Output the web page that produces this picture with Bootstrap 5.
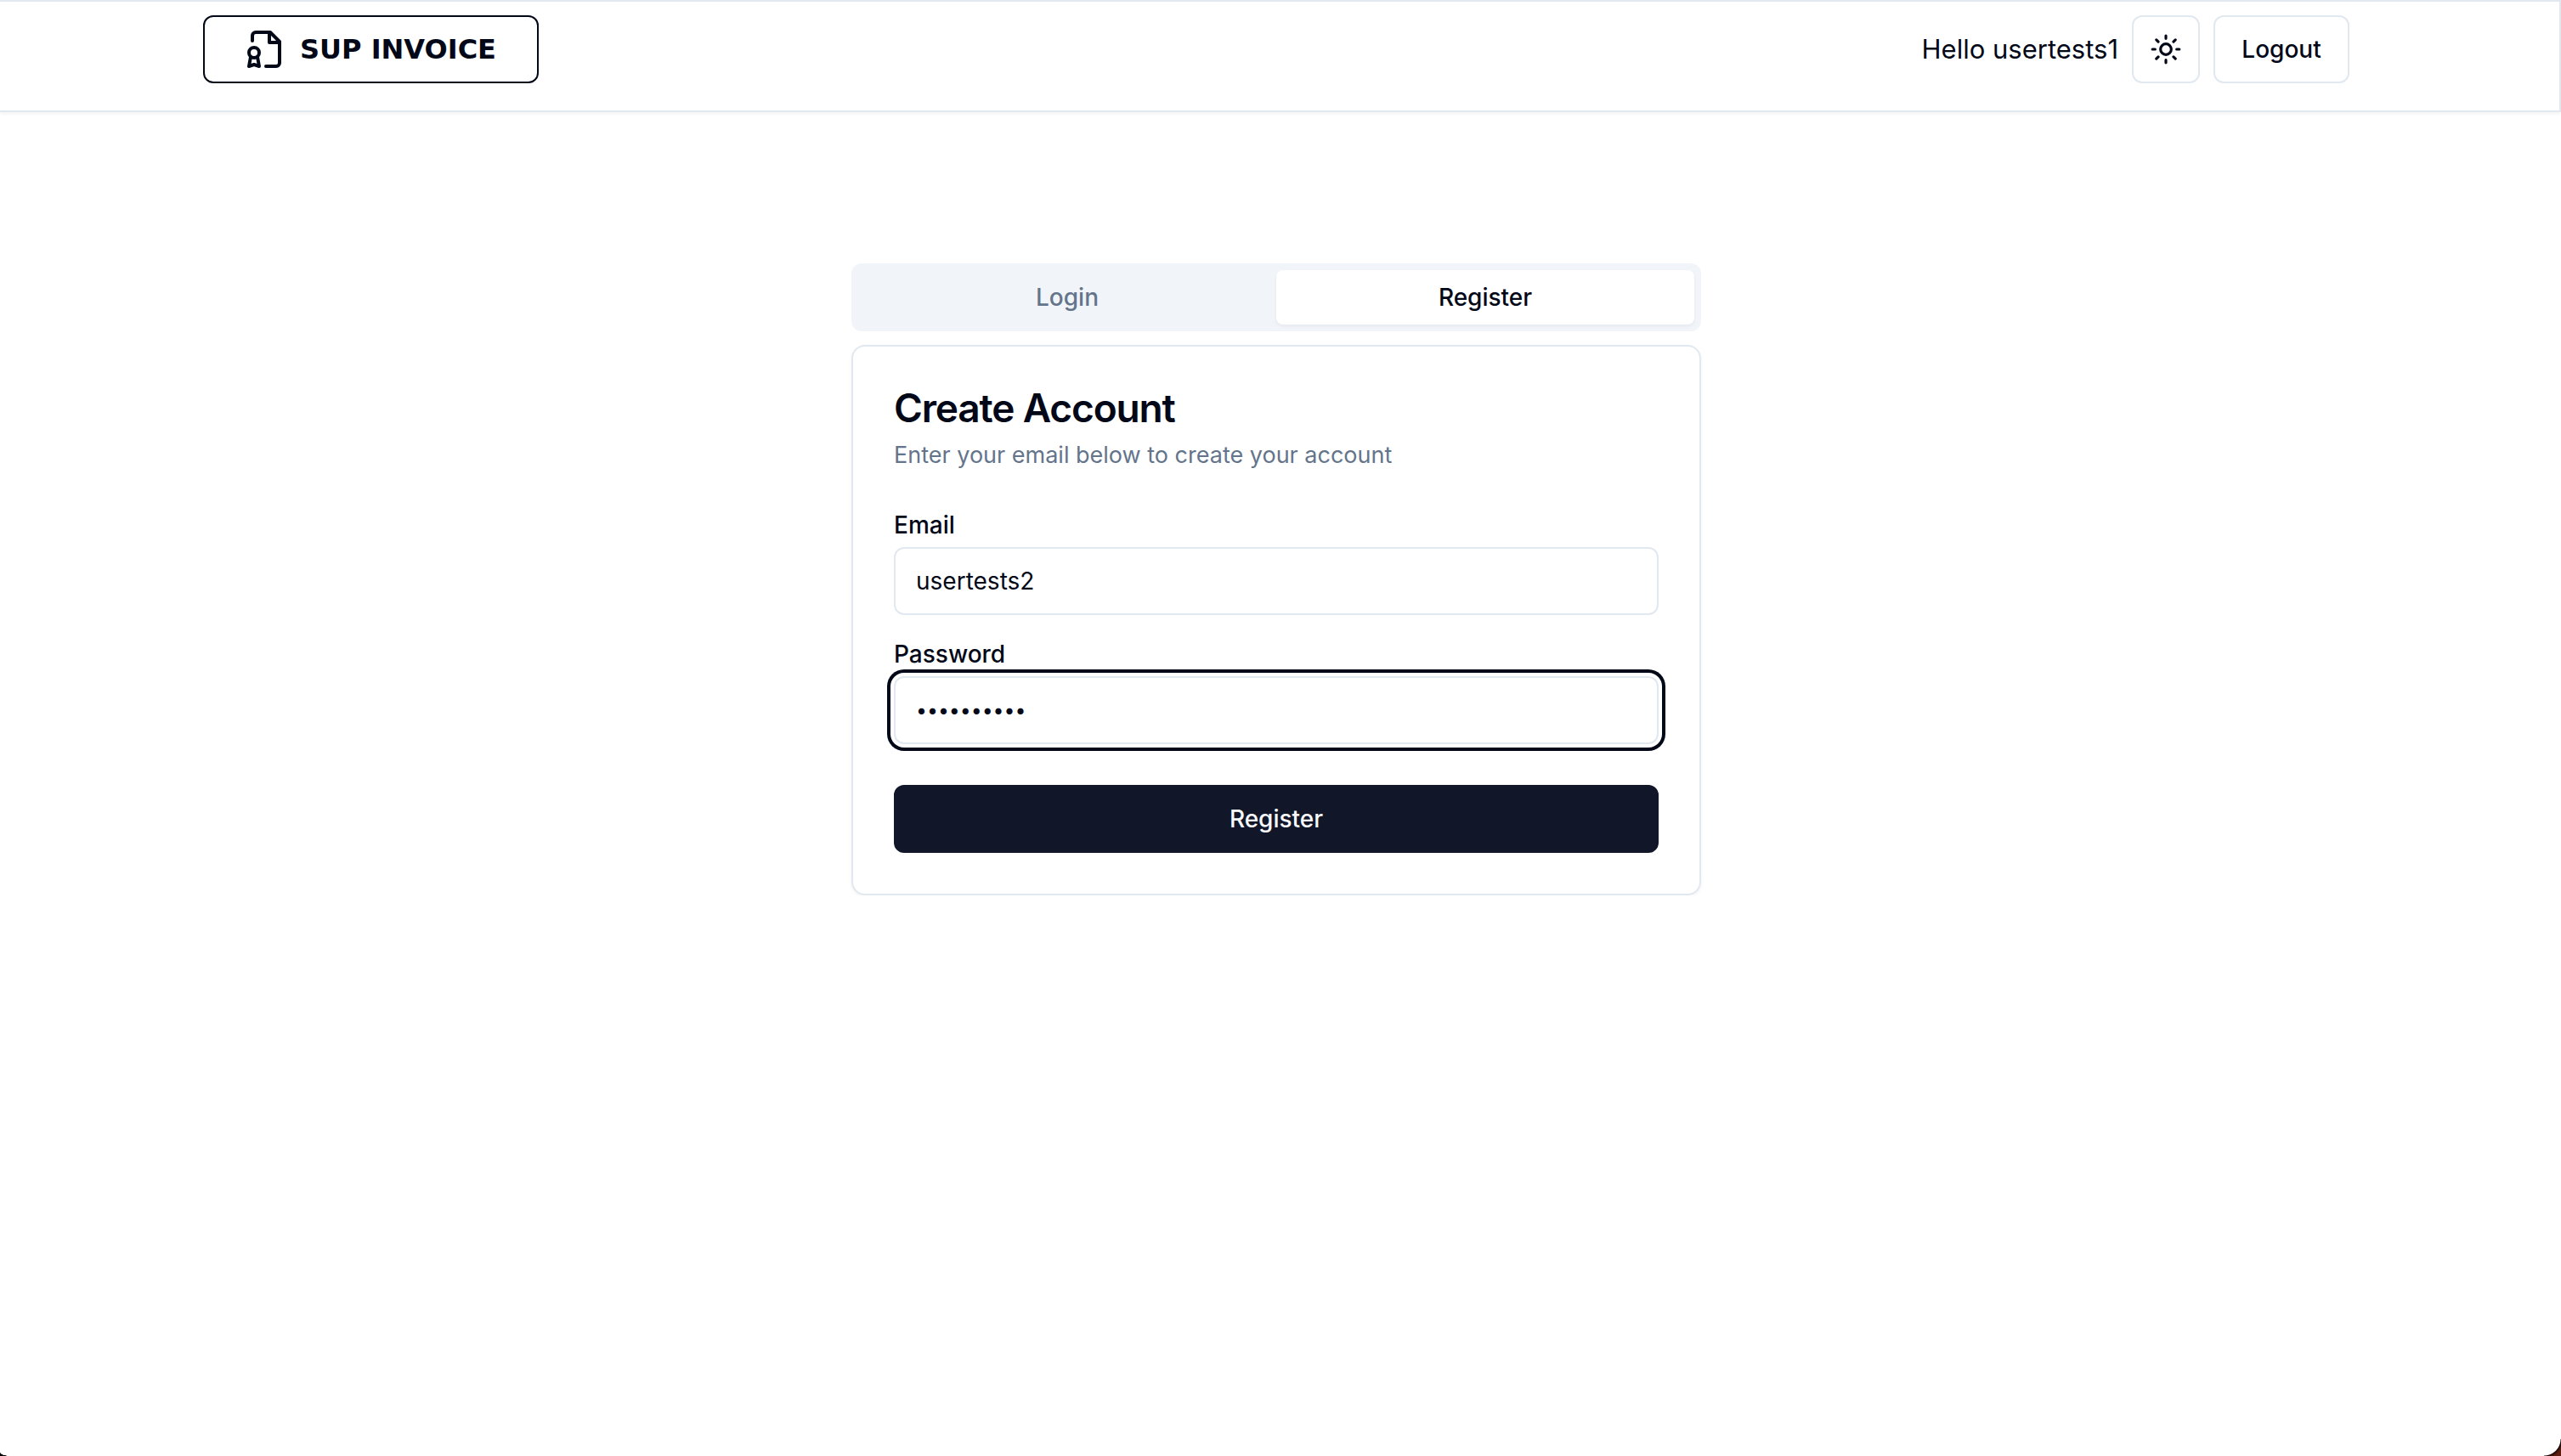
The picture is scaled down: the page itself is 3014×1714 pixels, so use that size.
<!DOCTYPE html>
<html lang="en">
<head>
<meta charset="utf-8">
<meta name="viewport" content="width=device-width, initial-scale=1">
<title>Sup Invoice</title>
<link href="https://cdn.jsdelivr.net/npm/bootstrap@5.3.0/dist/css/bootstrap.min.css" rel="stylesheet">
<style>
  :root { --ink: #020817; --muted: #64748b; --line: #e2e8f0; --soft: #f1f5f9; --primary: #111628; }
  body { font-family: Inter, "Liberation Sans", sans-serif; font-size: 28px; line-height: 40px; color: var(--ink); background: #fff; }
  .site-header { border: 2px solid var(--line); border-left: 0; padding: 16px 8px 32px 0; box-shadow: 0 2px 4px rgba(0, 0, 0, .05); }
  .site-inner { width: 90%; max-width: 2526px; }
  .btn { --bs-btn-font-size: 28px; --bs-btn-line-height: 40px; --bs-btn-font-weight: 500; --bs-btn-color: var(--ink); --bs-btn-border-width: 2px; --bs-btn-border-color: var(--line); --bs-btn-border-radius: 12px; --bs-btn-padding-y: 18px; --bs-btn-padding-x: 32px; min-height: 80px; }
  .btn-brand { --bs-btn-border-color: var(--ink); --bs-btn-padding-x: 48px; --bs-btn-padding-y: 0; gap: 16px; font-family: "DejaVu Sans", sans-serif; font-size: 32px; font-weight: 700; }
  .btn-square { --bs-btn-padding-x: 0; --bs-btn-padding-y: 0; width: 80px; }
  .btn-logout { --bs-btn-padding-x: 0; width: 160px; }
  .btn-submit { --bs-btn-color: #f8fafc; --bs-btn-bg: var(--primary); --bs-btn-border-color: var(--primary); }
  .greeting { font-size: 31px; }
  .icon-line { fill: none; stroke: currentColor; stroke-width: 2; stroke-linecap: round; stroke-linejoin: round; }
  .page-main { padding: 178px 10px 0 0; }
  .auth-panel { max-width: 1000px; }
  .auth-tabs { background: var(--soft); border-radius: 12px; padding: 8px; margin-bottom: 16px; }
  .auth-tabs .nav-link { padding: 12px 24px; line-height: 40px; font-weight: 500; color: var(--muted); background: transparent; border: 0; border-radius: 8px; }
  .auth-tabs .nav-link.active { color: var(--ink); background: #fff; box-shadow: 0 2px 4px rgba(0, 0, 0, .05); }
  .auth-card { --bs-card-border-width: 2px; --bs-card-border-color: var(--line); --bs-card-border-radius: 16px; --bs-card-spacer-x: 48px; --bs-card-spacer-y: 48px; box-shadow: 0 2px 4px rgba(0, 0, 0, .05); color: var(--ink); }
  .auth-title { font-size: 46px; line-height: 48px; font-weight: 600; letter-spacing: -0.025em; margin-bottom: 12px; }
  .auth-note { font-size: 27px; color: var(--muted); margin-bottom: 48px; }
  .form-label { display: block; line-height: 28px; font-weight: 500; margin-bottom: 12px; }
  .form-control { height: 80px; padding: 16px 24px; border: 2px solid var(--line); border-radius: 12px; font-size: 28px; line-height: 40px; color: var(--ink); }
  .form-control[type="password"] { font-size: 23px; }
  .field-row { margin-bottom: 32px; }
  .field-row:last-of-type { margin-bottom: 48px; }
  .form-control.is-current { box-shadow: 0 0 0 4px #fff, 0 0 0 8px var(--ink); }
  .window-corner { position: fixed; bottom: 0; width: 20px; height: 20px; pointer-events: none; }
  .corner-start { left: 0; width: 12px; height: 4px; background: radial-gradient(ellipse 12px 4px at 100% 0, transparent 92%, #000 100%); }
  .corner-end { right: 0; background: radial-gradient(circle at 0 0, transparent 19px, #1a0806 20px, #5c1c10 23px); }
</style>
<script src="https://cdn.jsdelivr.net/npm/bootstrap@5.3.0/dist/js/bootstrap.bundle.min.js"></script>
</head>
<body>
<header class="site-header">
  <div class="site-inner mx-auto d-flex justify-content-between align-items-center">
    <button type="button" class="btn btn-brand d-flex align-items-center">
      <svg class="icon-line" width="48" height="48" viewBox="0 0 24 24" aria-hidden="true">
        <path d="M4 7V4a2 2 0 0 1 2-2h8.500L20 7.500V20a2 2 0 0 1-2 2h-6"/>
        <path d="M14 2v6h6"/>
        <path d="M5 17a3 3 0 1 0 0-6 3 3 0 0 0 0 6Z"/>
        <path d="M7 16.500 8 22l-3-1-3 1 1-5.500"/>
      </svg>
      <span>SUP INVOICE</span>
    </button>
    <div class="d-flex align-items-center gap-3">
      <span class="greeting">Hello usertests1</span>
      <button type="button" class="btn btn-square d-flex align-items-center justify-content-center" aria-label="Toggle theme">
        <svg class="icon-line" width="38" height="38" viewBox="0 0 24 24" aria-hidden="true">
          <circle cx="12" cy="12" r="4"/>
          <path d="M12 2v2M12 20v2M4.930 4.930l1.410 1.410M17.660 17.660l1.410 1.410M2 12h2M20 12h2M6.340 17.660l-1.410 1.410M19.070 4.930l-1.410 1.410"/>
        </svg>
      </button>
      <button type="button" class="btn btn-logout">Logout</button>
    </div>
  </div>
</header>

<main class="page-main">
  <div class="auth-panel mx-auto">
    <div class="auth-tabs nav nav-fill" role="tablist">
      <button type="button" class="nav-link w-50" role="tab" aria-selected="false">Login</button>
      <button type="button" class="nav-link active w-50" role="tab" aria-selected="true">Register</button>
    </div>
    <section class="card auth-card">
      <div class="card-body">
        <h1 class="auth-title">Create Account</h1>
        <p class="auth-note">Enter your email below to create your account</p>
        <form>
          <div class="field-row">
            <label class="form-label" for="email">Email</label>
            <input class="form-control" id="email" type="text" value="usertests2">
          </div>
          <div class="field-row">
            <label class="form-label" for="password">Password</label>
            <input class="form-control is-current" id="password" type="password" value="usertests2">
          </div>
          <button type="button" class="btn btn-submit w-100">Register</button>
        </form>
      </div>
    </section>
  </div>
</main>
<div class="window-corner corner-start"></div>
<div class="window-corner corner-end"></div>
</body>
</html>
